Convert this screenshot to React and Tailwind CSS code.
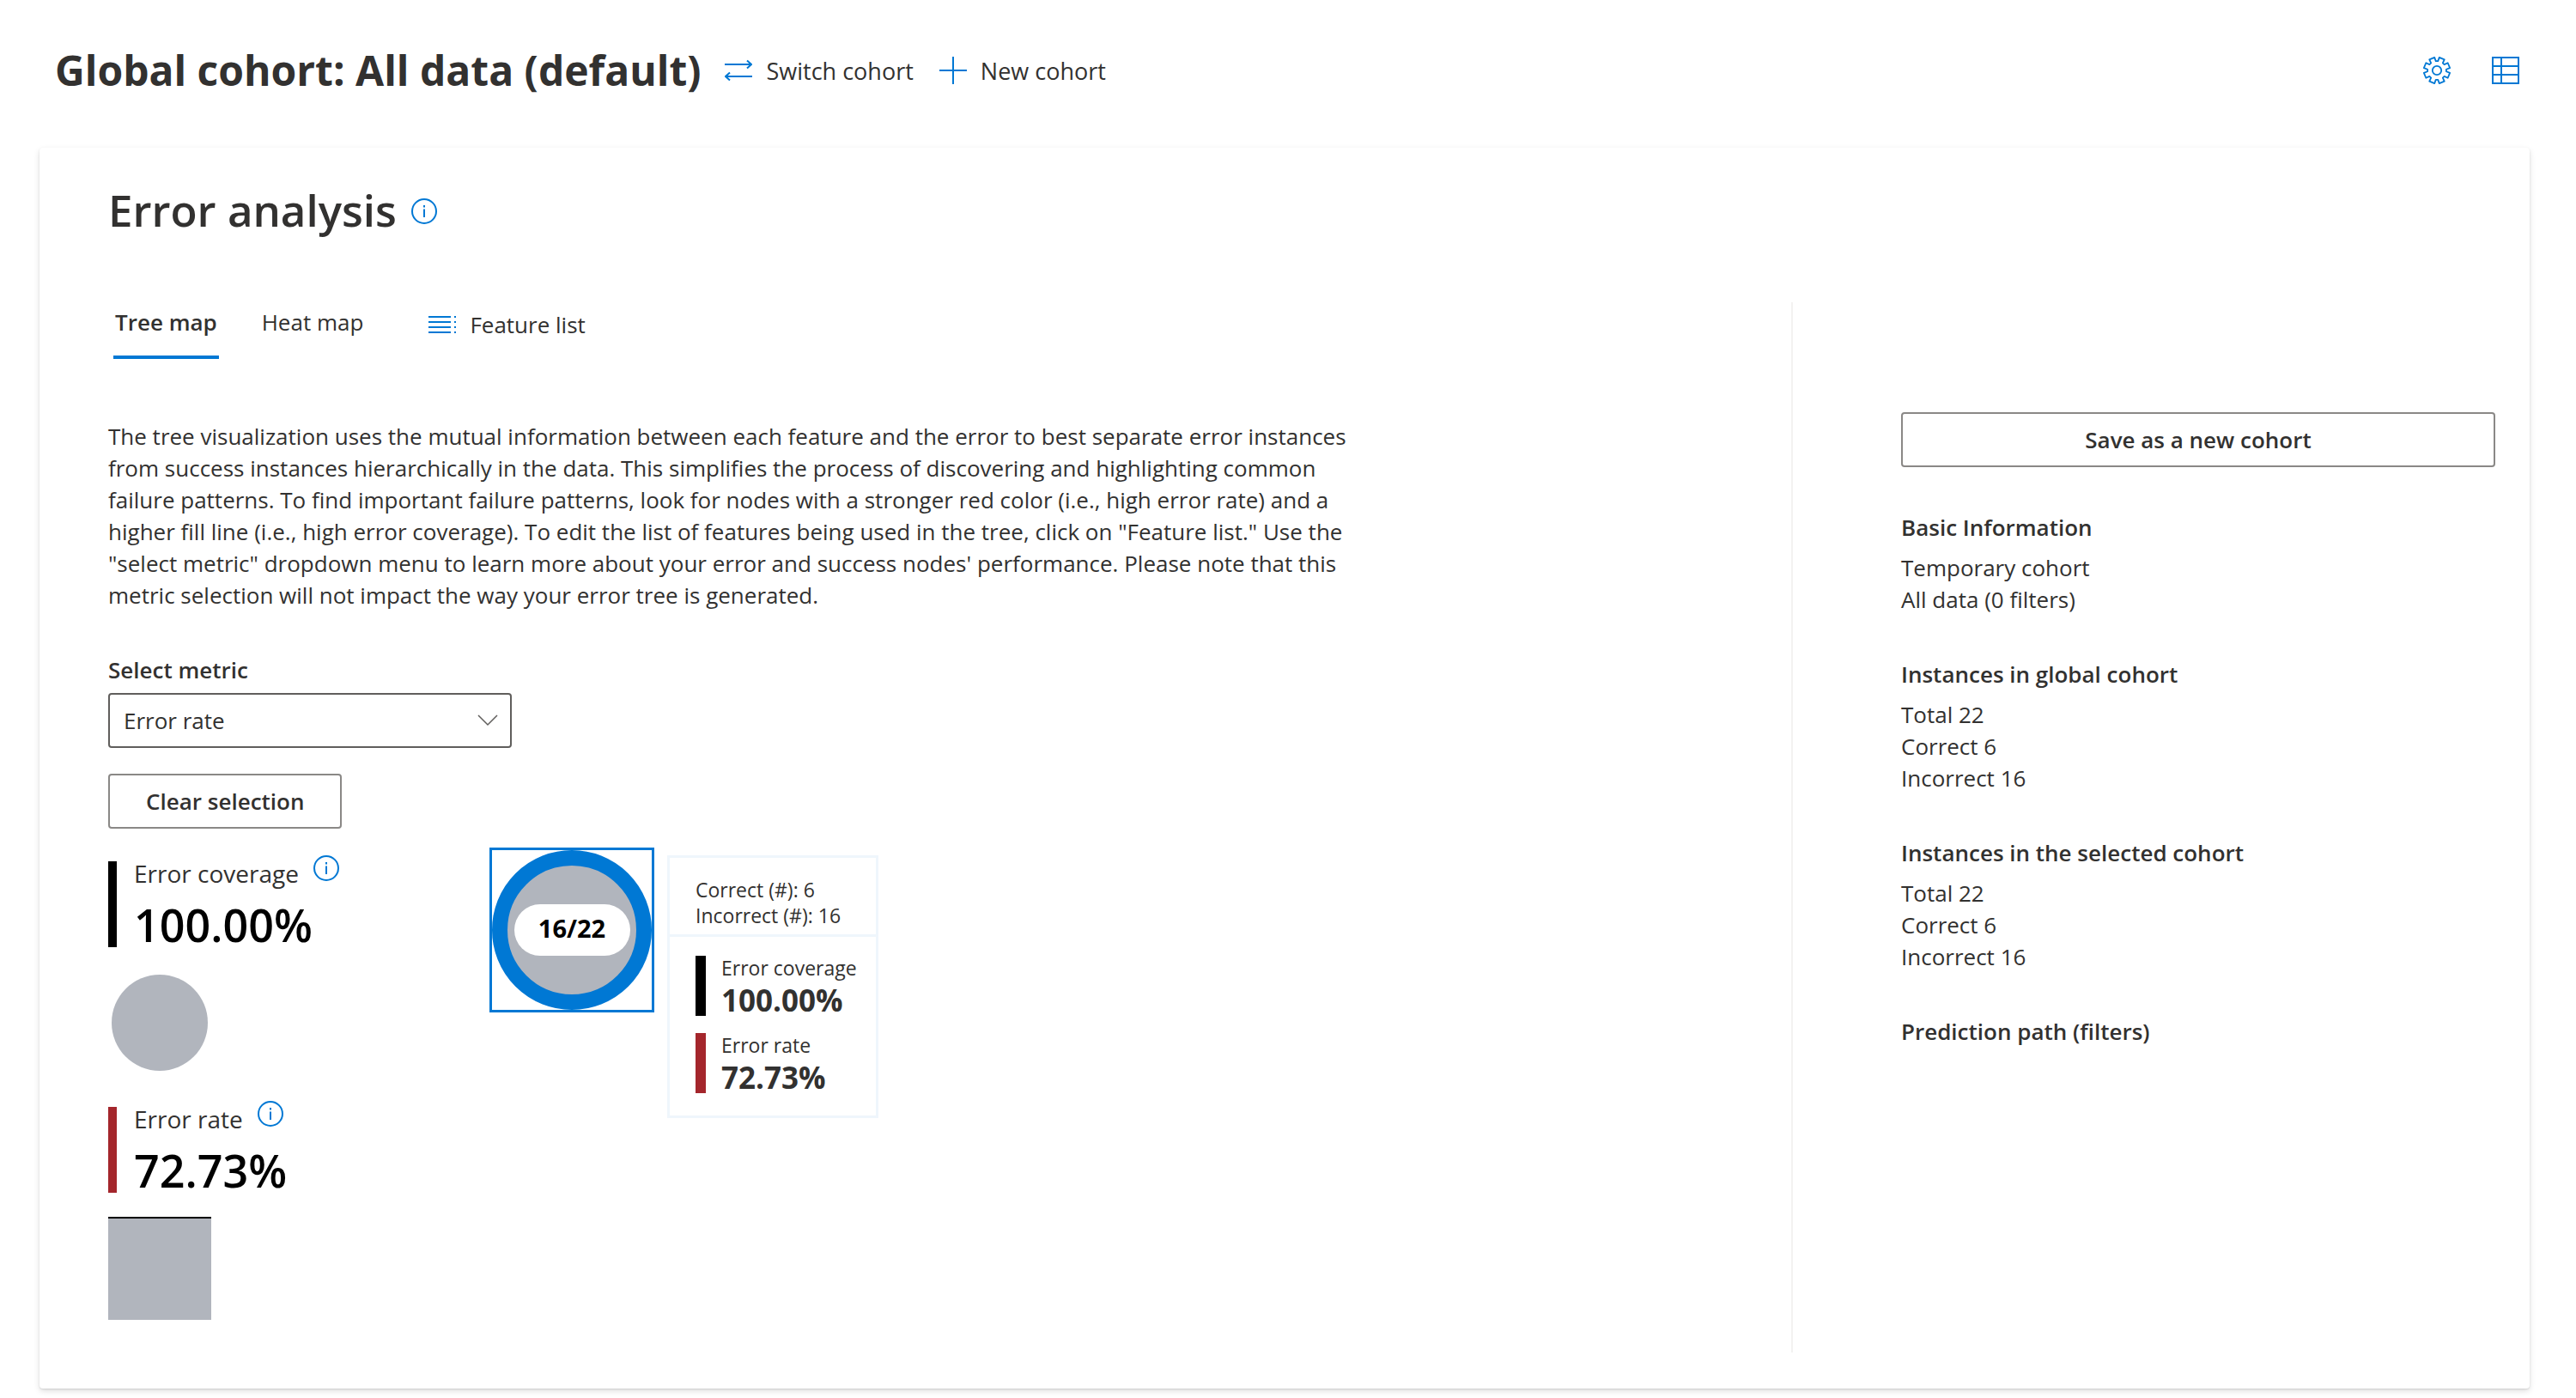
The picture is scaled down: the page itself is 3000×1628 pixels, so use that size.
import React from "react";

function InfoIcon() {
  return (
    <svg viewBox="0 0 32 32" className="block size-8" fill="none" stroke="#0078d4" strokeWidth="2" aria-hidden="true">
      <circle cx="16" cy="16" r="14" />
      <path d="M16 13.5V23M16 9v2.4" />
    </svg>
  );
}

function InfoButton({ label }) {
  return (
    <button type="button" aria-label={label} className="shrink-0">
      <InfoIcon />
    </button>
  );
}

function SwitchIcon() {
  return (
    <svg viewBox="0 0 32 32" className="size-8 shrink-0" fill="none" stroke="#0078d4" strokeWidth="2" aria-hidden="true">
      <path d="M0 9h31M26 4.500l5 4.500-5 4.500M32 23H1M6 18.500L1 23l5 4.500" />
    </svg>
  );
}

function PlusIcon() {
  return (
    <svg viewBox="0 0 32 32" className="size-8 shrink-0" fill="none" stroke="#0078d4" strokeWidth="2" aria-hidden="true">
      <path d="M16 0v32M0 16h32" />
    </svg>
  );
}

function GearIcon() {
  const steps = [];
  const n = 8;
  const point = (r, deg) => {
    const a = (deg * Math.PI) / 180;
    return `${(16 + r * Math.cos(a)).toFixed(2)} ${(16 + r * Math.sin(a)).toFixed(2)}`;
  };
  for (let i = 0; i < n; i += 1) {
    const c = i * 45 + 22.5;
    steps.push(point(11, c - 16), point(15.4, c - 12), point(15.4, c + 12), point(11, c + 16));
  }
  return (
    <svg viewBox="0 0 32 32" className="block size-8" fill="none" stroke="#0078d4" strokeWidth="1.8" strokeLinejoin="round" aria-hidden="true">
      <path d={`M${steps.join("L")}Z`} />
      <circle cx="16" cy="16" r="5.2" />
    </svg>
  );
}

function TableIcon() {
  return (
    <svg viewBox="0 0 32 32" className="block size-8" fill="none" stroke="#0078d4" strokeWidth="2" aria-hidden="true">
      <path d="M1 1h30v30H1zM11 1v30M1 11h30M1 21h30" />
    </svg>
  );
}

function ListIcon() {
  return (
    <svg viewBox="0 0 32 32" className="size-8 shrink-0" fill="none" stroke="#0078d4" strokeWidth="2" aria-hidden="true">
      <path d="M0 7h26M0 13h26M0 19h26M0 25h26M30 7h2M30 13h2M30 19h2M30 25h2" />
    </svg>
  );
}

function Metric({ title, value, bar, children }) {
  return (
    <section>
      <div className="flex h-[108px] gap-5">
        <div className={`mt-2 w-2.5 ${bar}`} />
        <div>
          <div className="flex items-start gap-4">
            <h3 className="pt-1 text-[28px] leading-9">{title}</h3>
            <InfoButton label={`About ${title.toLowerCase()}`} />
          </div>
          <p className="text-[52px] leading-[84px] font-semibold text-black">{value}</p>
        </div>
      </div>
      {children}
    </section>
  );
}

function TooltipMetric({ title, value, bar }) {
  return (
    <div className="flex h-[70px] gap-[18px]">
      <div className={`w-3 ${bar}`} />
      <div>
        <p className="text-[23px] leading-7">{title}</p>
        <p className="text-[35px] leading-[48px] font-bold">{value}</p>
      </div>
    </div>
  );
}

function CohortInfo({ title, lines }) {
  return (
    <section>
      <h3 className="mb-2.5 font-semibold">{title}</h3>
      {lines.map((line) => (
        <p key={line}>{line}</p>
      ))}
    </section>
  );
}

const counts = ["Total 22", "Correct 6", "Incorrect 16"];

export default function App() {
  return (
    <div className="min-h-screen bg-white pr-[54px] pb-3 pl-[46px] font-['Open_Sans','Noto_Sans',sans-serif] text-[26px] leading-[37px] text-[#323130]">
      <header className="flex h-[172px] items-start pt-[46px] pr-3 pl-[18px] text-[27px]">
        <h1 className="text-[48px] leading-[72px] font-bold">Global cohort: All data (default)</h1>
        <button type="button" className="ml-7 flex h-[72px] items-center gap-4">
          <SwitchIcon />
          Switch cohort
        </button>
        <button type="button" className="ml-[30px] flex h-[72px] items-center gap-4">
          <PlusIcon />
          New cohort
        </button>
        <div className="ml-auto flex h-[72px] items-center gap-12">
          <button type="button" aria-label="Settings">
            <GearIcon />
          </button>
          <button type="button" aria-label="Cohort table">
            <TableIcon />
          </button>
        </div>
      </header>

      <main className="rounded-sm bg-white pt-9 pr-10 pb-[42px] pl-20 shadow-[0_3px_7px_rgba(0,0,0,0.13),0_1px_2px_rgba(0,0,0,0.11)]">
        <div className="flex items-center gap-4">
          <h2 className="pb-1 text-[51px] leading-[72px] font-semibold">Error analysis</h2>
          <InfoButton label="About error analysis" />
        </div>

        <div className="mt-[68px] flex">
          <div className="min-w-0 flex-1 pb-[38px]">
            <div className="flex items-start">
              <div role="tablist" className="flex gap-12 pl-1.5">
                <button type="button" role="tab" aria-selected="true" className="h-[66px] border-b-4 border-[#0078d4] px-0.5 pt-1 pb-5 font-semibold">
                  Tree map
                </button>
                <button type="button" role="tab" aria-selected="false" className="h-[66px] border-b-4 border-transparent px-0.5 pt-1 pb-5">
                  Heat map
                </button>
              </div>
              <button type="button" className="ml-[74px] flex h-[52px] items-center gap-4">
                <ListIcon />
                Feature list
              </button>
            </div>

            <p className="mt-[72px] max-w-[1476px]">
              The tree visualization uses the mutual information between each feature and the error to best separate
              error instances from success instances hierarchically in the data. This simplifies the process of
              discovering and highlighting common failure patterns. To find important failure patterns, look for nodes
              with a stronger red color (i.e., high error rate) and a higher fill line (i.e., high error coverage). To
              edit the list of features being used in the tree, click on "Feature list." Use the "select metric"
              dropdown menu to learn more about your error and success nodes' performance. Please note that this metric
              selection will not impact the way your error tree is generated.
            </p>

            <label htmlFor="metric" className="mt-[50px] block font-semibold">
              Select metric
            </label>
            <div className="relative mt-2 w-[470px]">
              <select id="metric" className="block h-16 w-full appearance-none rounded-sm border-2 border-[#605e5c] bg-white px-4">
                <option>Error rate</option>
              </select>
              <svg viewBox="0 0 24 14" className="pointer-events-none absolute top-[25px] right-4 h-3.5 w-6" fill="none" stroke="#605e5c" strokeWidth="1.5" aria-hidden="true">
                <path d="M1 1l11 11L23 1" />
              </svg>
            </div>
            <button type="button" className="mt-[30px] block h-16 rounded-sm border-2 border-[#8a8886] px-[42px] font-semibold">
              Clear selection
            </button>

            <div className="mt-[22px] flex items-start">
              <div className="w-[444px] shrink-0 pt-2">
                <Metric title="Error coverage" value="100.00%" bar="bg-black">
                  <div className="mt-8 ml-1 size-28 rounded-full bg-[#b1b5bd]" />
                </Metric>
                <div className="h-[34px]" />
                <Metric title="Error rate" value="72.73%" bar="bg-[#a4262c]">
                  <div className="mt-7 size-[120px] border-t-2 border-black bg-[#b1b5bd]" />
                </Metric>
              </div>

              <button type="button" className="flex size-48 shrink-0 items-center justify-center border-3 border-[#0078d4]">
                <span className="flex size-[186px] items-center justify-center rounded-full border-[18px] border-[#0078d4] bg-[#b1b5bd]">
                  <span className="flex h-15 w-[135px] shrink-0 items-center justify-center rounded-full bg-white pb-1.5 text-[29px] font-bold text-black">
                    16/22
                  </span>
                </span>
              </button>

              <div role="tooltip" className="mt-[9px] ml-[15px] w-[246px] border-3 border-[#eff6fc] pb-[26px]">
                <div className="border-b-3 border-[#eff6fc] pt-[22px] pb-[7px] pl-[30px] text-[23px] leading-[30px]">
                  <p>Correct (#): 6</p>
                  <p>Incorrect (#): 16</p>
                </div>
                <div className="flex flex-col gap-5 pt-[22px] pl-[30px]">
                  <TooltipMetric title="Error coverage" value="100.00%" bar="bg-black" />
                  <TooltipMetric title="Error rate" value="72.73%" bar="bg-[#a4262c]" />
                </div>
              </div>
            </div>
          </div>

          <aside className="w-[820px] shrink-0 border-l-2 border-[#f3f2f1] pt-32 pl-[126px]">
            <button type="button" className="block h-16 w-full rounded-sm border-2 border-[#8a8886] font-semibold">
              Save as a new cohort
            </button>
            <div className="mt-[52px] flex flex-col gap-[50px]">
              <CohortInfo title="Basic Information" lines={["Temporary cohort", "All data (0 filters)"]} />
              <CohortInfo title="Instances in global cohort" lines={counts} />
              <CohortInfo title="Instances in the selected cohort" lines={counts} />
              <CohortInfo title="Prediction path (filters)" lines={[]} />
            </div>
          </aside>
        </div>
      </main>
    </div>
  );
}
